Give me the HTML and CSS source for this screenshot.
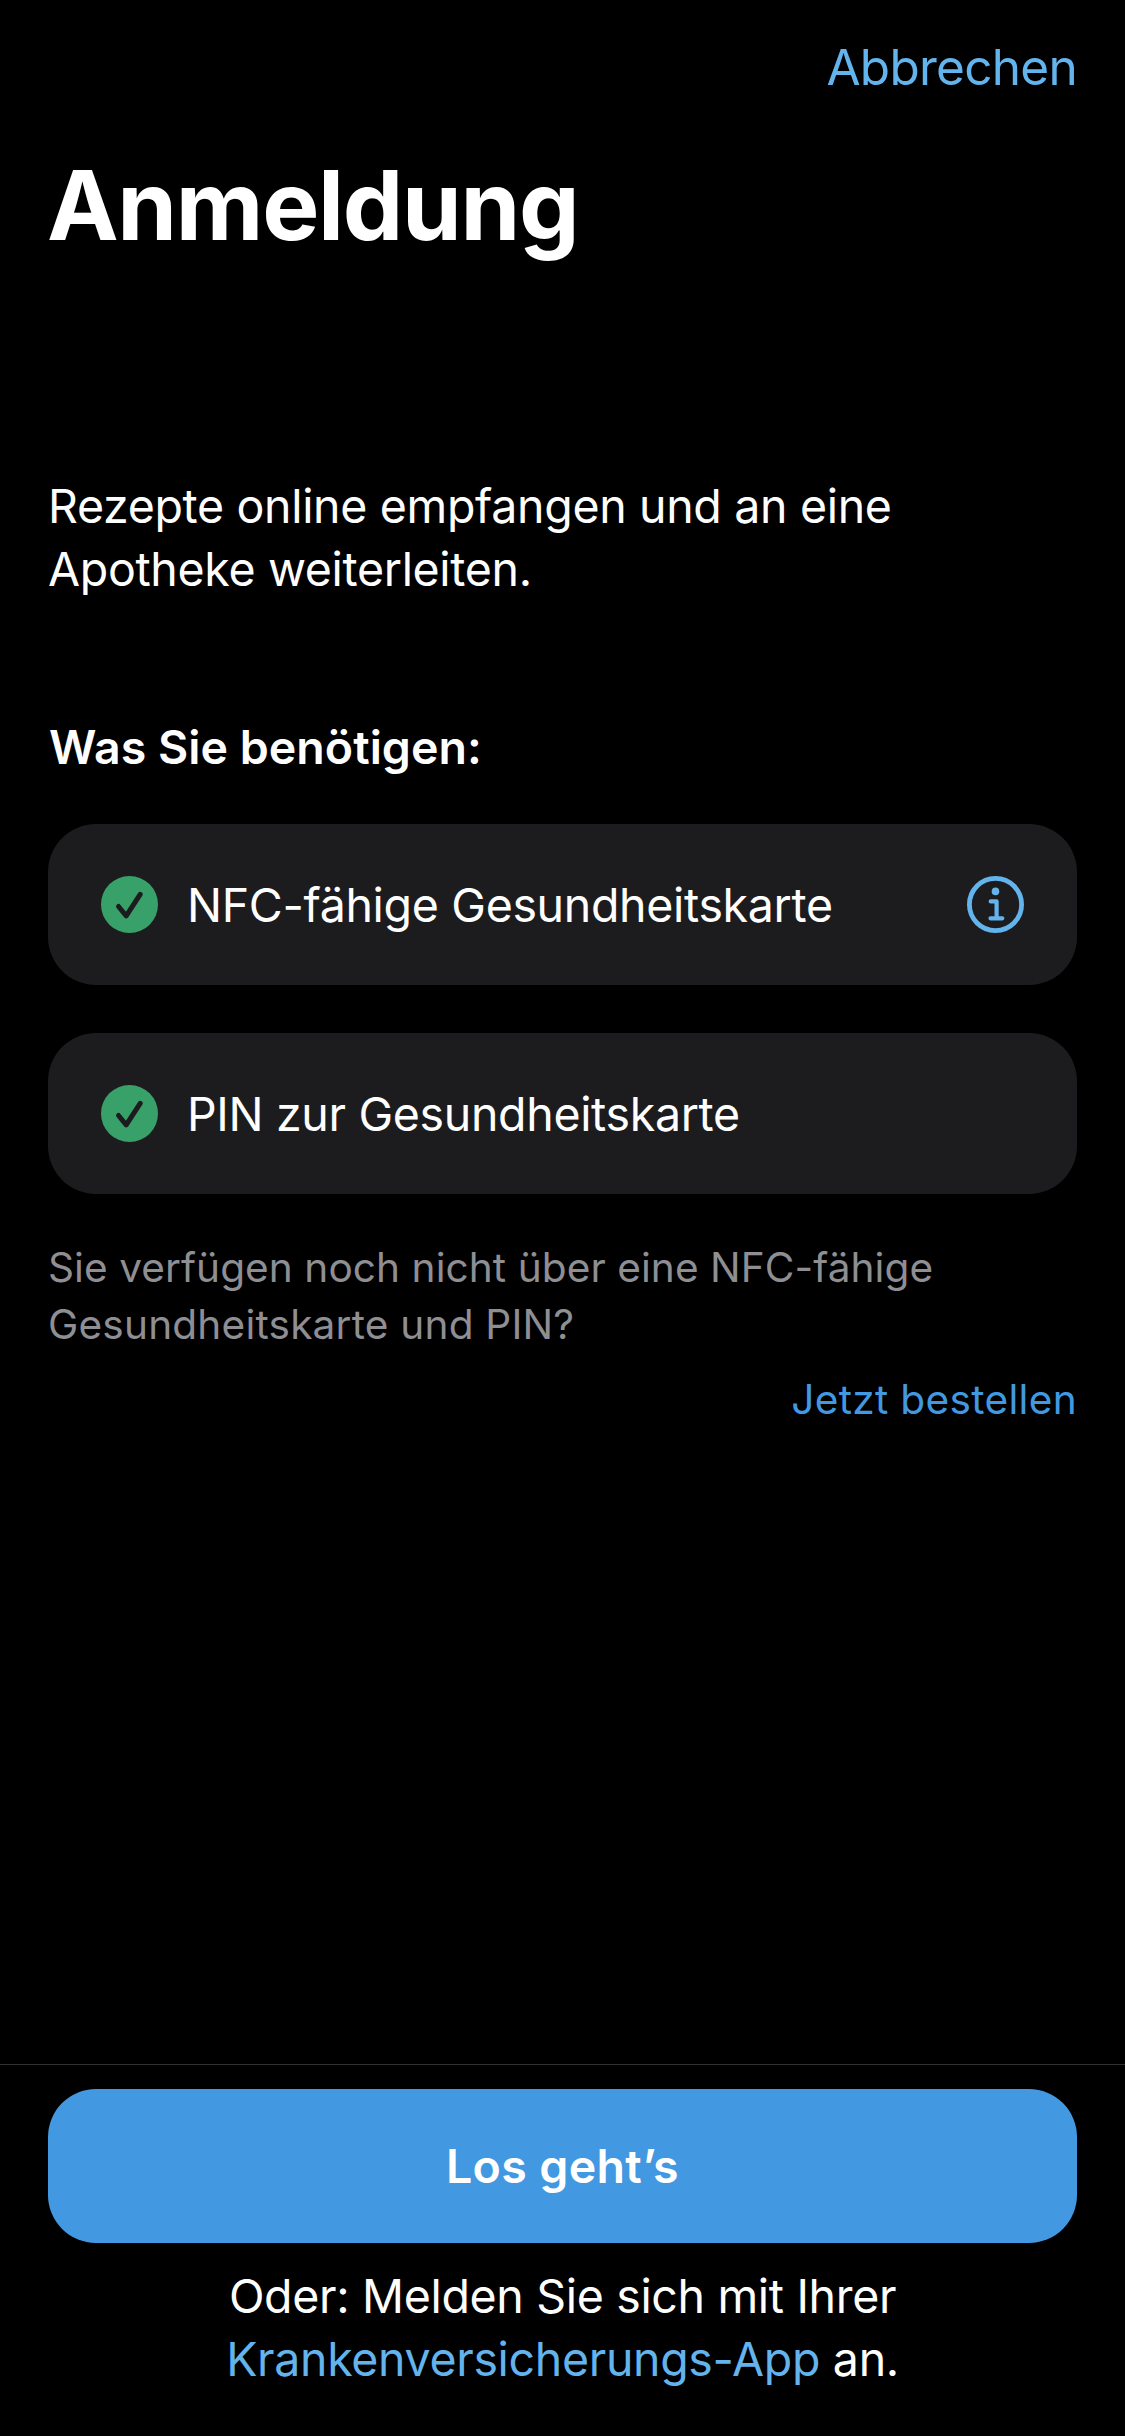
FILE: index.html
```
<!DOCTYPE html>
<html lang="de">
<head>
<meta charset="utf-8">
<title>Anmeldung</title>
<link rel="stylesheet" href="styles.css">
</head>
<body>
<div class="screen">
  <header class="nav"><a class="cancel">Abbrechen</a></header>
  <main class="content">
    <h1 class="title">Anmeldung</h1>
    <p class="intro">Rezepte online empfangen und an eine<br>Apotheke weiterleiten.</p>
    <h2 class="subtitle">Was Sie benötigen:</h2>
    <ul class="cards">
      <li class="card">
        <svg class="icon" viewBox="0 0 57 57"><circle class="check-disc" cx="28.5" cy="28.5" r="28.5"/><path class="check-mark" d="M17.5 30.5 25.2 39.8 39.2 18.3"/></svg>
        <span class="label">NFC-fähige Gesundheitskarte</span>
        <svg class="icon info" viewBox="0 0 57 57"><circle class="info-line ring" cx="28.5" cy="28.5" r="26.1"/><circle class="info-dot" cx="28.5" cy="15.4" r="3.8"/><path class="info-line" d="M23.7 25.4H29.6V42.3M23.5 42.3H35.3"/></svg>
      </li>
      <li class="card">
        <svg class="icon" viewBox="0 0 57 57"><circle class="check-disc" cx="28.5" cy="28.5" r="28.5"/><path class="check-mark" d="M17.5 30.5 25.2 39.8 39.2 18.3"/></svg>
        <span class="label">PIN zur Gesundheitskarte</span>
      </li>
    </ul>
    <p class="hint">Sie verfügen noch nicht über eine NFC-fähige<br><span class="hint-end">Gesundheitskarte und PIN?</span></p>
    <a class="order">Jetzt bestellen</a>
  </main>
  <footer class="footer">
    <button class="start">Los geht’s</button>
    <p class="alternative">Oder: Melden Sie sich mit Ihrer<br><a class="link">Krankenversicherungs-App</a> an.</p>
  </footer>
</div>
</body>
</html>
```
FILE: styles.css
```
* { box-sizing: border-box; }
body { margin: 0; background: #000; }
h1, h2, p, ul { margin: 0; padding: 0; }

.screen {
  display: flex;
  flex-direction: column;
  width: 1125px;
  height: 2436px;
  background: #000;
  color: #fff;
  font: 400 46.5px/63px Inter, "Liberation Sans", sans-serif;
  letter-spacing: -0.33px;
}

.nav {
  display: flex;
  justify-content: flex-end;
  padding: 37px 48px 0;
}
.cancel {
  color: #63b3ed;
  font-size: 49.5px;
  line-height: 60px;
  letter-spacing: -0.72px;
}

.content {
  display: flex;
  flex: 1;
  flex-direction: column;
  padding: 50px 48px 0;
}
.title {
  margin-left: -1px;
  font-size: 96px;
  font-weight: 700;
  line-height: 116px;
  letter-spacing: -1.3px;
}
.intro { margin-top: 212px; }
.subtitle {
  margin-top: 115px;
  padding-left: 1px;
  font-size: 46.5px;
  font-weight: 600;
  letter-spacing: 0.04px;
}

.cards {
  display: flex;
  flex-direction: column;
  gap: 48px;
  margin-top: 45px;
  list-style: none;
}
.card {
  display: flex;
  align-items: center;
  gap: 29px;
  height: 161px;
  padding: 0 53px;
  border-radius: 48px;
  background: #1c1c1e;
}
.label { padding-top: 2px; }
.icon { display: block; flex: none; width: 57px; height: 57px; }
.info { margin-left: auto; }
.check-disc { fill: #38a169; }
.check-mark {
  fill: none;
  stroke: #1c1c1e;
  stroke-width: 5;
  stroke-linecap: round;
  stroke-linejoin: round;
}
.info-line {
  fill: none;
  stroke: #63b3ed;
  stroke-width: 4.2;
  stroke-linecap: round;
  stroke-linejoin: round;
}
.ring { stroke-width: 4.8; }
.info-dot { fill: #63b3ed; }

.hint {
  margin-top: 45px;
  color: #8e8e93;
  font-size: 40.6px;
  line-height: 57px;
  letter-spacing: 0.07px;
}
.hint-end { letter-spacing: 0.2px; }
.order {
  align-self: flex-end;
  margin-top: 18px;
  color: #4299e1;
  font-size: 40.6px;
  line-height: 57px;
  letter-spacing: 0.32px;
}

.footer {
  display: flex;
  flex-direction: column;
  height: 371px;
  height: 372px;
  padding: 24px 48px 0;
  border-top: 1px solid #303031;
}
.start {
  height: 154px;
  padding: 0;
  border: 0;
  border-radius: 48px;
  background: #4299e1;
  color: #fff;
  font: 600 46.5px/63px Inter, "Liberation Sans", sans-serif;
  letter-spacing: 0.35px;
}
.alternative { margin-top: 22px; text-align: center; }
.link { color: #63b3ed; }
```
